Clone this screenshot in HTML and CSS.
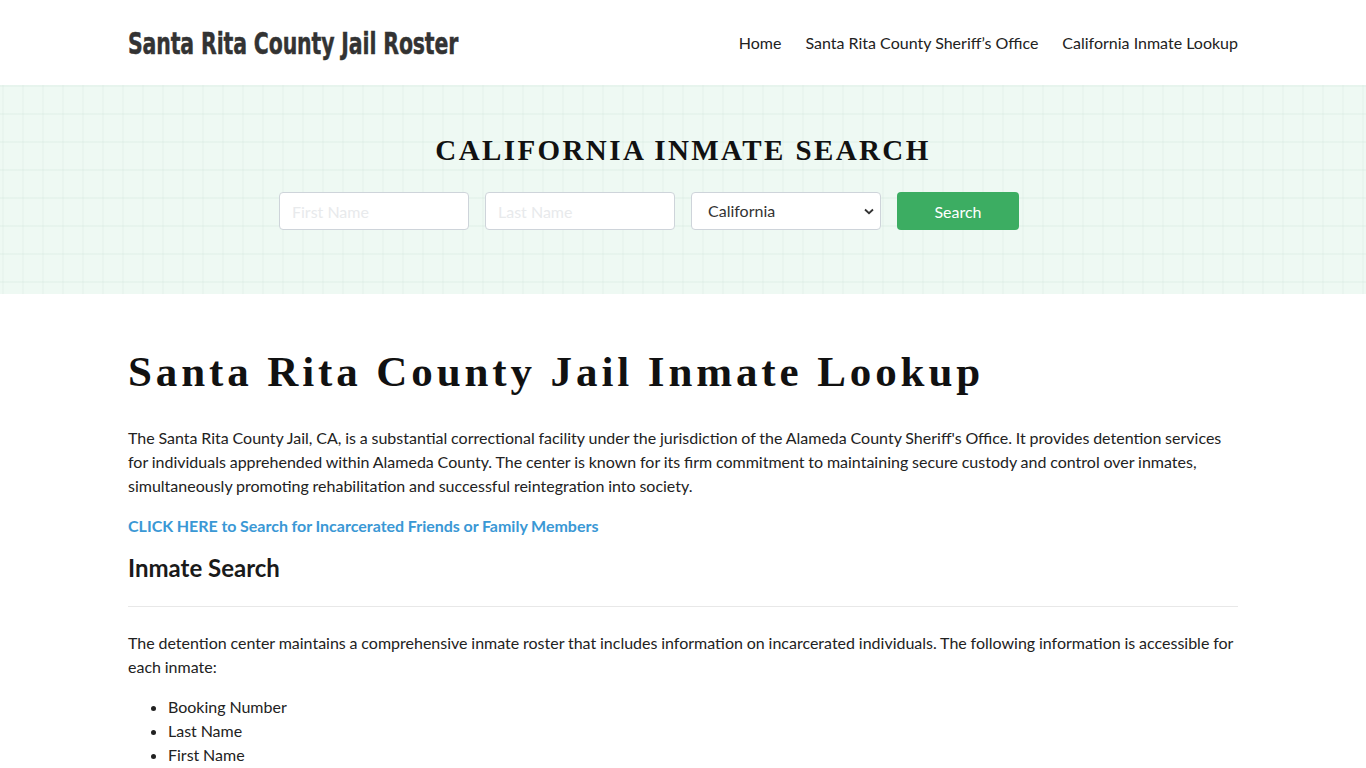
FILE: index.html
```
<!DOCTYPE html>
<html lang="en">
<head>
<meta charset="utf-8">
<title>Santa Rita County Jail Roster</title>
<link rel="stylesheet" href="styles.css">
</head>
<body>
<header class="site-header">
  <div class="container header-inner">
    <a class="brand" href="#"><span class="brand-text">Santa Rita County Jail Roster</span></a>
    <nav class="nav">
      <a href="#">Home</a>
      <a href="#">Santa Rita County Sheriff’s Office</a>
      <a href="#">California Inmate Lookup</a>
    </nav>
  </div>
</header>
<section class="hero">
  <h2 class="hero-title">CALIFORNIA INMATE SEARCH</h2>
  <form class="search-form">
    <input class="field" type="text" placeholder="First Name">
    <input class="field" type="text" placeholder="Last Name">
    <div class="select-wrap">
      <span class="select-value">California</span>
      <svg class="chev" width="10" height="7" viewBox="0 0 10 7"><path d="M1 1.5 L5 5.2 L9 1.5" fill="none" stroke="#333" stroke-width="1.8"/></svg>
    </div>
    <button class="btn" type="button">Search</button>
  </form>
</section>
<main class="container content">
  <h1 class="page-title">Santa Rita County Jail Inmate Lookup</h1>
  <p>The Santa Rita County Jail, CA, is a substantial correctional facility under the jurisdiction of the Alameda County Sheriff's Office. It provides detention services for individuals apprehended within Alameda County. The center is known for its firm commitment to maintaining secure custody and control over inmates, simultaneously promoting rehabilitation and successful reintegration into society.</p>
  <p class="cta-line"><a class="cta" href="#">CLICK HERE to Search for Incarcerated Friends or Family Members</a></p>
  <h2 class="section-title">Inmate Search</h2>
  <hr class="rule">
  <p>The detention center maintains a comprehensive inmate roster that includes information on incarcerated individuals. The following information is accessible for each inmate:</p>
  <ul class="list">
    <li>Booking Number</li>
    <li>Last Name</li>
    <li>First Name</li>
  </ul>
</main>
</body>
</html>
```
FILE: styles.css
```
* { box-sizing: border-box; }
html, body { margin: 0; padding: 0; }
body {
  font-family: Lato, "Open Sans", sans-serif;
  font-size: 16px;
  line-height: 24px;
  color: #222;
  background: #fff;
}
a { text-decoration: none; }
.container {
  width: 1110px;
  margin: 0 auto;
}
.site-header { height: 85px; background: #fff; }
.header-inner {
  height: 85px;
  display: flex;
  align-items: center;
  justify-content: space-between;
}
.brand {
  display: block;
  width: 330px;
  height: 34px;
  overflow: visible;
  color: #333;
}
.brand-text {
  display: inline-block;
  white-space: nowrap;
  font-family: "DejaVu Sans", sans-serif;
  font-weight: 700;
  font-size: 31px;
  line-height: 34px;
  letter-spacing: -0.2px;
  transform: scaleX(0.66);
  transform-origin: left center;
  -webkit-text-stroke: 0.5px #333;
}
.nav { display: flex; gap: 24px; margin-top: 1px; }
.nav a { color: #222; font-size: 16px; }
.hero {
  height: 209px;
  background-color: #eef9f3;
  background-image:
    linear-gradient(to right, rgba(214,232,222,0.22) 2px, transparent 2px),
    linear-gradient(to bottom, rgba(214,232,222,0.3) 2px, transparent 2px);
  background-size: 20px 28px;
  background-position: 2px 0;
  padding-top: 48px;
}
.hero-title {
  margin: 0;
  text-align: center;
  font-family: "Liberation Serif", "DejaVu Serif", serif;
  font-weight: 700;
  font-size: 29px;
  line-height: 34px;
  letter-spacing: 2.4px;
  color: #111;
}
.search-form {
  display: flex;
  justify-content: center;
  gap: 16px;
  margin-top: 25px;
  padding-right: 68px;
}
.field, .select-wrap {
  width: 190px;
  height: 38px;
  border: 1px solid #ced4da;
  border-radius: 4px;
  background: #fff;
  font-family: Lato, sans-serif;
  font-size: 16px;
  padding: 0 12px;
  color: #333;
}
.field::placeholder { color: #e8eaec; }
.select-wrap {
  display: flex;
  align-items: center;
  justify-content: space-between;
  padding: 0 6px 0 16px;
}
.select-value { color: #333; }
.btn {
  width: 122px;
  height: 38px;
  border: none;
  border-radius: 4px;
  background: #3cad62;
  color: #fff;
  font-family: Lato, sans-serif;
  font-size: 16px;
}
.content { padding-top: 52px; word-spacing: -0.3px; }
.page-title {
  margin: 0 0 28px;
  font-family: "Liberation Serif", "DejaVu Serif", serif;
  font-weight: 700;
  font-size: 43px;
  line-height: 52px;
  letter-spacing: 3.9px;
  word-spacing: 0;
  color: #111;
}
.content p { margin: 0 0 16px; }
.content .cta-line { margin-bottom: 15px; }
.cta { color: #3a98d5; font-weight: 700; }
.section-title {
  margin: 0;
  font-size: 24px;
  line-height: 30px;
  font-weight: 700;
  color: #1a1a1a;
  font-family: Lato, sans-serif;
  word-spacing: 0;
}
.rule {
  border: none;
  border-top: 1px solid #e8e8e8;
  margin: 23px 0 24px;
}
.list { margin: 0; padding-left: 40px; }
```
